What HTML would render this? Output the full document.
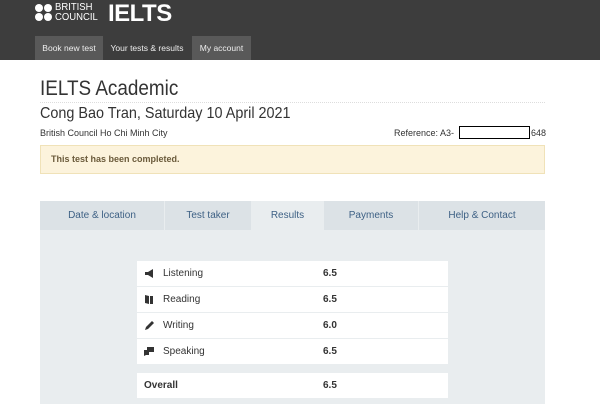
<!DOCTYPE html>
<html><head><meta charset="utf-8"><style>
*{margin:0;padding:0;box-sizing:border-box}
body{width:600px;height:404px;overflow:hidden;background:#fff;font-family:"Liberation Sans",sans-serif;position:relative}
.hdr{position:absolute;left:0;top:0;width:600px;height:60px;background:#3d3d3d}
.abs{position:absolute}
.nav{position:absolute;top:36px;height:24px;font-size:8.5px;color:#eee;text-align:center;line-height:24px}
.tab{position:absolute;top:201px;height:29px;background:#dce2e6;color:#3e6185;font-size:10px;text-align:center;line-height:29px}
.row{position:absolute;left:137px;width:311px;height:25px;background:#fff;font-size:10px;color:#333;line-height:25px}
.row .n{position:absolute;left:26px}
.row .s{position:absolute;left:186px;font-weight:bold}
.ic{position:absolute;left:7px;top:8px}
</style></head><body>
<div class="hdr"></div>
<div class="abs" style="left:35px;top:4px;width:18px;height:18px">
<div class="abs" style="left:0;top:0;width:8px;height:8px;border-radius:50%;background:#fff"></div>
<div class="abs" style="left:9px;top:0;width:8px;height:8px;border-radius:50%;background:#fff"></div>
<div class="abs" style="left:0;top:9px;width:8px;height:8px;border-radius:50%;background:#fff"></div>
<div class="abs" style="left:9px;top:9px;width:8px;height:8px;border-radius:50%;background:#fff"></div>
</div>
<div class="abs" style="left:55px;top:3px;color:#fff;font-size:10px;line-height:10px;transform:scaleX(0.95);transform-origin:left">BRITISH<br>COUNCIL</div>
<div class="abs" style="left:108px;top:0px;color:#fff;font-size:24px;font-weight:bold;letter-spacing:-0.5px">IELTS</div>
<div class="nav" style="left:35px;width:68px;background:#595959">Book new test</div>
<div class="nav" style="left:103px;width:88px">Your tests &amp; results</div>
<div class="nav" style="left:192px;width:59px;background:#595959">My account</div>
<div class="abs" style="left:40px;top:77px;font-size:21px;color:#333;transform:scaleX(0.9);transform-origin:left">IELTS Academic</div>
<div class="abs" style="left:40px;top:102px;width:505px;border-top:1px dotted #ddd"></div>
<div class="abs" style="left:40px;top:105px;font-size:16px;color:#333;transform:scaleX(0.9);transform-origin:left;white-space:nowrap">Cong Bao Tran, Saturday 10 April 2021</div>
<div class="abs" style="left:40px;top:128px;font-size:9px;color:#333">British Council Ho Chi Minh City</div>
<div class="abs" style="left:394px;top:128px;font-size:9px;color:#333">Reference: A3-</div>
<div class="abs" style="left:459px;top:126px;width:71px;height:13px;border:1px solid #000;background:#fff"></div>
<div class="abs" style="left:531px;top:128px;font-size:9px;color:#333">648</div>
<div class="abs" style="left:40px;top:145px;width:505px;height:29px;background:#fcf3dc;border:1px solid #f0e2b8"></div>
<div class="abs" style="left:51px;top:154px;font-size:9px;font-weight:bold;color:#6a5a3a">This test has been completed.</div>
<div class="abs" style="left:40px;top:201px;width:505px;height:203px;background:#e9edef"></div>
<div class="tab" style="left:40px;width:124px">Date &amp; location</div>
<div class="tab" style="left:165px;width:86px">Test taker</div>
<div class="tab" style="left:252px;width:71px;background:#e9edef">Results</div>
<div class="tab" style="left:324px;width:94px">Payments</div>
<div class="tab" style="left:419px;width:126px">Help &amp; Contact</div>
<div class="row" style="top:261px"><svg class="ic" width="10" height="9" viewBox="0 0 10 9"><path d="M1 3h3l5-3v9L4 6H1z" fill="#333"/></svg><span class="n">Listening</span><span class="s">6.5</span></div>
<div class="row" style="top:287px"><svg class="ic" width="10" height="9" viewBox="0 0 10 9"><path d="M1 0l4 1v8L1 8zM6 1h3v8H6z" fill="#333"/></svg><span class="n">Reading</span><span class="s">6.5</span></div>
<div class="row" style="top:313px"><svg class="ic" width="10" height="9" viewBox="0 0 10 9"><path d="M1 9L2 6 8 0l2 2-6 6z" fill="#333"/></svg><span class="n">Writing</span><span class="s">6.0</span></div>
<div class="row" style="top:339px"><svg class="ic" width="10" height="9" viewBox="0 0 10 9"><path d="M3 0h7v5H3zM0 3h5v5H2L0 9z" fill="#333"/></svg><span class="n">Speaking</span><span class="s">6.5</span></div>
<div class="row" style="top:373px"><span class="n" style="left:7px;font-weight:bold">Overall</span><span class="s">6.5</span></div>
</body></html>
